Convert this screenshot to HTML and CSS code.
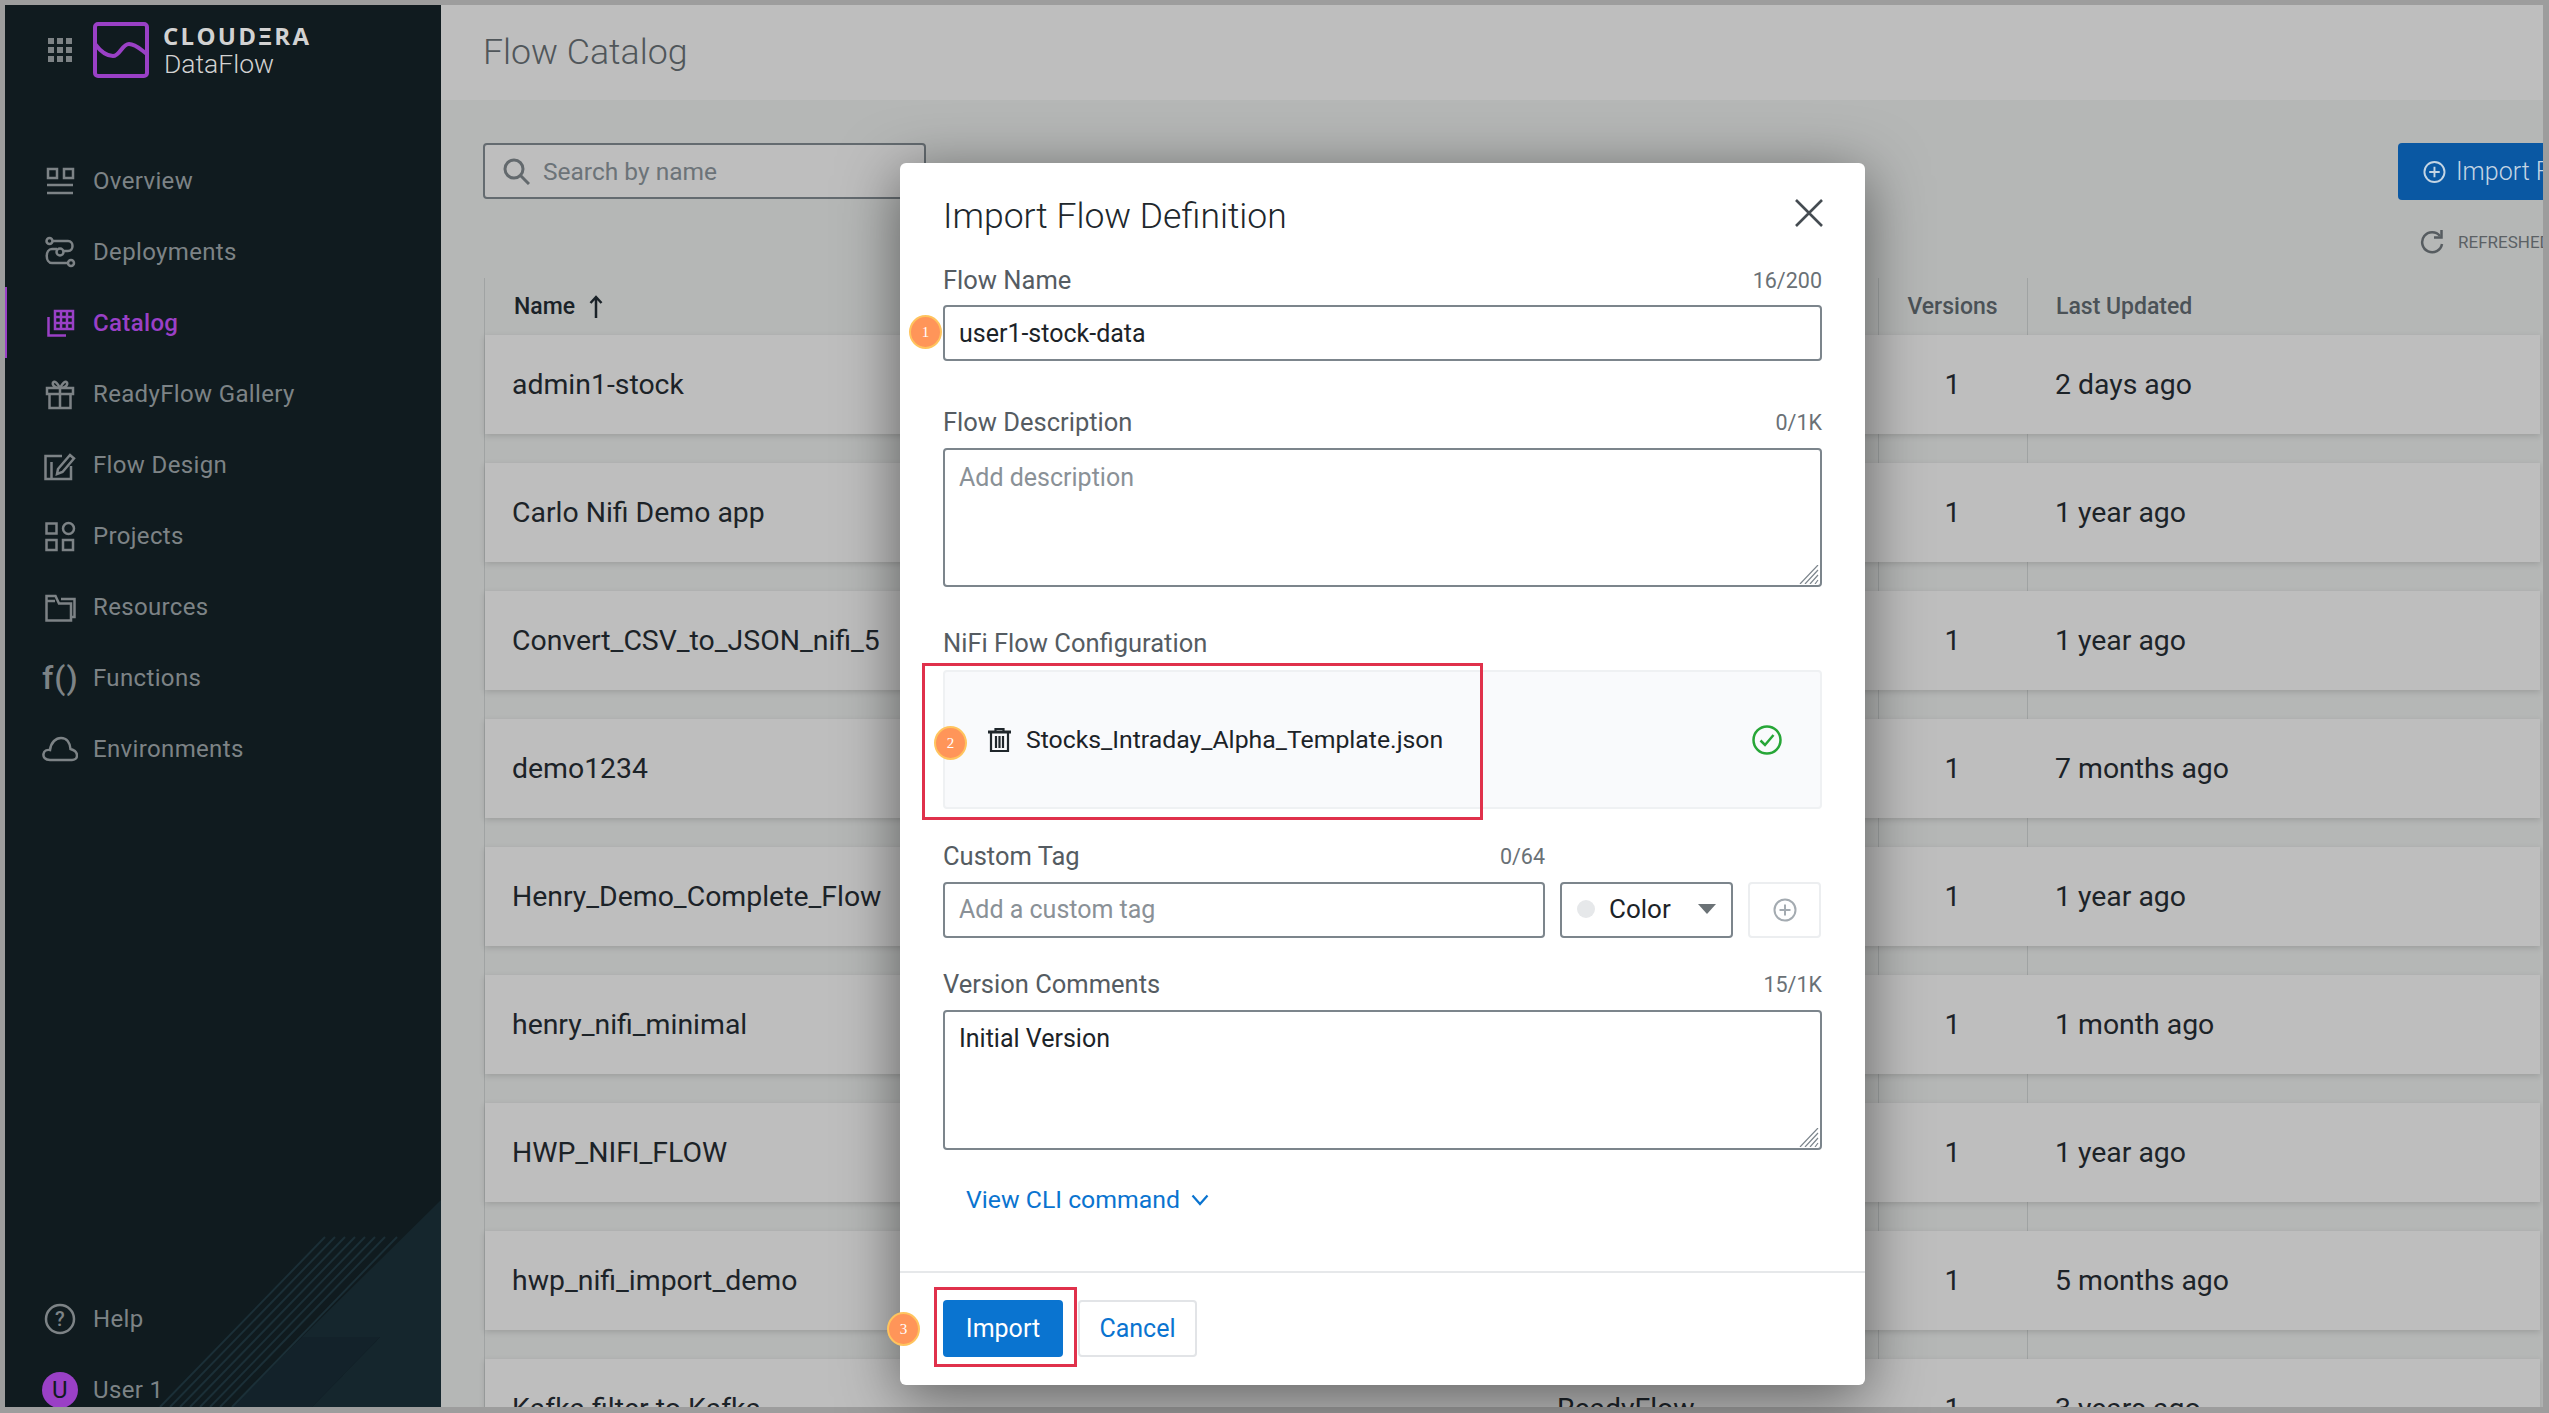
FILE: index.html
```html
<!DOCTYPE html>
<html lang="en">
<head>
<meta charset="utf-8">
<title>Flow Catalog</title>
<link rel="stylesheet" href="styles.css">
</head>
<body>
<div class="app">
  <aside class="sidebar">
    <svg class="deco" viewBox="0 0 436 207" width="436" height="207">
      <polygon points="436,0 297,137 375,137 307,207 436,207" fill="#15262d"/>
      <polygon points="297,137 375,137 307,207 227,207" fill="#13222a"/>
      <g stroke="#1b2f37" stroke-width="2">
        <line x1="320" y1="37" x2="155" y2="207"/><line x1="330" y1="37" x2="165" y2="207"/>
        <line x1="340" y1="37" x2="175" y2="207"/><line x1="350" y1="37" x2="185" y2="207"/>
        <line x1="360" y1="37" x2="195" y2="207"/><line x1="370" y1="37" x2="205" y2="207"/>
        <line x1="380" y1="37" x2="215" y2="207"/><line x1="392" y1="37" x2="227" y2="207"/>
      </g>
    </svg>
    <div class="brand">
      <svg class="apps" width="24" height="24" viewBox="0 0 24 24" fill="#7d8285">
        <rect x="0" y="0" width="6" height="6"/><rect x="9" y="0" width="6" height="6"/><rect x="18" y="0" width="6" height="6"/>
        <rect x="0" y="9" width="6" height="6"/><rect x="9" y="9" width="6" height="6"/><rect x="18" y="9" width="6" height="6"/>
        <rect x="0" y="18" width="6" height="6"/><rect x="9" y="18" width="6" height="6"/><rect x="18" y="18" width="6" height="6"/>
      </svg>
      <svg class="logo" width="56" height="56" viewBox="0 0 56 56" fill="none" stroke="#9a40c6" stroke-width="4">
        <rect x="2" y="2" width="52" height="52" rx="3"/>
        <path d="M2 22C8 30 14 34 20 34C27 34 29 22 36 22C43 22 48 28 54 32"/>
      </svg>
      <div class="brand-text">
        <div class="brand-name">CLOUDΞRA</div>
        <div class="brand-sub">DataFlow</div>
      </div>
    </div>
    <nav class="nav">
      <a class="nav-item">
        <svg class="ico" viewBox="0 0 36 32"><rect x="6" y="4" width="9" height="9"/><rect x="22" y="4" width="9" height="9"/><path d="M5 20H31M5 28H31"/></svg>
        <span>Overview</span>
      </a>
      <a class="nav-item">
        <svg class="ico" viewBox="0 0 36 32"><circle cx="7.5" cy="5" r="3"/><path d="M10.500 5H26C32 5 32 15 26 15H21"/><circle cx="18" cy="16" r="3.500"/><path d="M15 13H10C3 13 3 27 10 27H26"/><circle cx="29" cy="27" r="3"/></svg>
        <span>Deployments</span>
      </a>
      <a class="nav-item active">
        <svg class="ico" viewBox="0 0 36 32"><rect x="13" y="4" width="18" height="18"/><path d="M19 4V22M25 4V22M13 10H31M13 16H31M6.500 10V28.500H24"/></svg>
        <span>Catalog</span>
      </a>
      <a class="nav-item">
        <svg class="ico" viewBox="0 0 36 32"><path d="M5 10H31V16H5ZM7.500 16V30H28.500V16M18 10V30M18 10C13 10 10 7 11 4.500C13 2 16 6 18 10C20 6 23 2 25 4.500C26 7 23 10 18 10"/></svg>
        <span>ReadyFlow Gallery</span>
      </a>
      <a class="nav-item">
        <svg class="ico" viewBox="0 0 36 32"><path d="M20 7H3.500V30H29V17M9.500 13V30M16 20L28 6L32 9.500L20.500 23L15 25Z"/></svg>
        <span>Flow Design</span>
      </a>
      <a class="nav-item">
        <svg class="ico" viewBox="0 0 36 32"><rect x="4.500" y="3.500" width="10" height="10"/><circle cx="26.500" cy="8.500" r="5.500"/><rect x="4.500" y="20" width="10" height="10"/><rect x="21" y="20" width="10" height="10"/></svg>
        <span>Projects</span>
      </a>
      <a class="nav-item">
        <svg class="ico" viewBox="0 0 36 32"><path d="M4.500 10V29.500H29V12.500H17L13.500 5H4.500V10H13"/><path d="M19 8H32.500V26H29"/></svg>
        <span>Resources</span>
      </a>
      <a class="nav-item">
        <span class="fx">f()</span>
        <span>Functions</span>
      </a>
      <a class="nav-item">
        <svg class="ico" viewBox="0 0 36 32"><path d="M8 27C3 27 1 24 1.500 21C2 18 5 16.500 8 17C9 9 14 5 19 5C25 5 28 10 28.500 16C32 17 35 19 35 22.500C35 25.500 32.500 27 30 27Z"/></svg>
        <span>Environments</span>
      </a>
    </nav>
    <div class="side-foot">
      <a class="nav-item">
        <svg class="ico" viewBox="0 0 36 32"><circle cx="18" cy="16" r="14"/><text x="18" y="22.500" class="qm">?</text></svg>
        <span>Help</span>
      </a>
      <a class="nav-item">
        <span class="avatar">U</span>
        <span>User 1</span>
      </a>
    </div>
  </aside>

  <main class="main">
    <header class="topbar"><h1 class="page-title">Flow Catalog</h1></header>
    <section class="content">
      <div class="toolbar">
        <div class="search">
          <svg width="27" height="27" viewBox="0 0 27 27" fill="none" stroke="#63696d" stroke-width="3"><circle cx="11" cy="11" r="9"/><path d="M17.500 17.500L26 26"/></svg>
          <span>Search by name</span>
        </div>
        <div class="actions">
          <button class="import-flow">
            <svg width="24" height="24" viewBox="0 0 24 24" fill="none" stroke="#c4d5e4" stroke-width="2"><circle cx="12" cy="12" r="10.500"/><path d="M12 6.500V17.500M6.500 12H17.500"/></svg>
            <span>Import Flow Definition</span>
          </button>
          <div class="refresh">
            <svg width="24" height="26" viewBox="0 0 24 26" fill="none" stroke="#565c60" stroke-width="2.500"><path d="M20 7A10 10 0 1 0 22 15"/><path d="M21.500 1V8.500H14" /></svg>
            <span>REFRESHED 1 MIN AGO</span>
          </div>
        </div>
      </div>
      <div class="table">
        <div class="thead">
          <div class="th th-name">Name <svg width="14" height="24" viewBox="0 0 14 24" fill="none" stroke="#1a2228" stroke-width="2.500"><path d="M7 23V2M1.500 8L7 2L12.500 8"/></svg></div>
          <div class="th"></div>
          <div class="th th-ver">Versions</div>
          <div class="th th-up">Last Updated</div>
        </div>
        <div class="row"><div>admin1-stock</div><div></div><div class="ver">1</div><div class="up">2 days ago</div></div>
        <div class="row"><div>Carlo Nifi Demo app</div><div></div><div class="ver">1</div><div class="up">1 year ago</div></div>
        <div class="row"><div>Convert_CSV_to_JSON_nifi_5</div><div></div><div class="ver">1</div><div class="up">1 year ago</div></div>
        <div class="row"><div>demo1234</div><div></div><div class="ver">1</div><div class="up">7 months ago</div></div>
        <div class="row"><div>Henry_Demo_Complete_Flow</div><div></div><div class="ver">1</div><div class="up">1 year ago</div></div>
        <div class="row"><div>henry_nifi_minimal</div><div></div><div class="ver">1</div><div class="up">1 month ago</div></div>
        <div class="row"><div>HWP_NIFI_FLOW</div><div></div><div class="ver">1</div><div class="up">1 year ago</div></div>
        <div class="row"><div>hwp_nifi_import_demo</div><div></div><div class="ver">1</div><div class="up">5 months ago</div></div>
        <div class="row"><div>Kafka filter to Kafka</div><div>ReadyFlow</div><div class="ver">1</div><div class="up">3 years ago</div></div>
      </div>
    </section>
  </main>
</div>

<div class="modal">
  <div class="modal-head">
    <h2 class="modal-title">Import Flow Definition</h2>
    <svg class="close" width="30" height="30" viewBox="0 0 30 30" fill="none" stroke="#454c52" stroke-width="2.600"><path d="M2 2L28 28M28 2L2 28"/></svg>
  </div>
  <div class="modal-body">
    <div class="field f-name">
      <div class="label-row"><label>Flow Name</label><span class="count">16/200</span></div>
      <div class="input">user1-stock-data</div>
    </div>
    <div class="field f-desc">
      <div class="label-row"><label>Flow Description</label><span class="count">0/1K</span></div>
      <div class="input area placeholder">Add description
        <svg class="grip" width="20" height="19" viewBox="0 0 20 19" stroke="#7c858c" stroke-width="1.200"><path d="M1 19L19 0M6 19L19 5M11 19L19 10M16 19L19 15"/></svg>
      </div>
    </div>
    <div class="field f-nifi">
      <div class="label-row"><label>NiFi Flow Configuration</label></div>
      <div class="dropzone">
        <svg width="23" height="24" viewBox="0 0 23 24" fill="none" stroke="#1f262b" stroke-width="2.200"><path d="M0 4H23" stroke-width="3"/><path d="M7.500 3V1H15.500V3M3 5V23H20V5M8 8V20M11.500 8V20M15 8V20"/></svg>
        <span class="file">Stocks_Intraday_Alpha_Template.json</span>
        <svg class="ok" width="30" height="30" viewBox="0 0 30 30" fill="none" stroke="#27a637" stroke-width="2.500"><circle cx="15" cy="15" r="13.500"/><path d="M8.500 15.500L13 20L21.500 10"/></svg>
      </div>
    </div>
    <div class="field f-tag">
      <div class="tag-grid">
        <div class="label-row tag-label"><label>Custom Tag</label><span class="count">0/64</span></div>
        <div class="input placeholder nudge">Add a custom tag</div>
        <div class="color-select nudge"><i class="dot"></i><span>Color</span><i class="caret"></i></div>
        <div class="add-tag">
          <svg width="24" height="24" viewBox="0 0 24 24" fill="none" stroke="#a4abb1" stroke-width="2"><circle cx="12" cy="12" r="10.500"/><path d="M12 6.500V17.500M6.500 12H17.500"/></svg>
        </div>
      </div>
    </div>
    <div class="field f-ver">
      <div class="label-row"><label>Version Comments</label><span class="count">15/1K</span></div>
      <div class="input area">Initial Version
        <svg class="grip" width="20" height="19" viewBox="0 0 20 19" stroke="#7c858c" stroke-width="1.200"><path d="M1 19L19 0M6 19L19 5M11 19L19 10M16 19L19 15"/></svg>
      </div>
    </div>
    <a class="cli">View CLI command
      <svg width="18" height="12" viewBox="0 0 18 12" fill="none" stroke="#0a74d0" stroke-width="2.200"><path d="M1.500 1.500L9 10L16.500 1.500"/></svg>
    </a>
  </div>
  <div class="modal-foot">
    <button class="btn primary">Import</button>
    <button class="btn ghost">Cancel</button>
  </div>
  <div class="redbox rb-file"></div>
  <div class="redbox rb-import"></div>
  <div class="badge b1">1</div>
  <div class="badge b2">2</div>
  <div class="badge b3">3</div>
</div>
</body>
</html>
```
FILE: styles.css
```css
* { box-sizing: border-box; }
html, body { margin: 0; height: 100%; overflow: hidden; }
body {
  position: relative;
  width: 2549px;
  height: 1413px;
  padding: 5px 6px 6px 5px;
  background: #9d9d9d;
  font-family: Roboto, "Liberation Sans", sans-serif;
}
.app { display: flex; height: 1402px; overflow: hidden; }

/* Sidebar */
.sidebar {
  position: relative;
  flex: 0 0 436px;
  display: flex;
  flex-direction: column;
  background: #101b1f;
  overflow: hidden;
}
.deco { position: absolute; left: 0; bottom: 0; }
.brand { position: relative; display: flex; align-items: center; height: 140px; padding: 0 0 50px 43px; }
.logo { margin-left: 21px; }
.brand-text { margin-left: 14px; }
.brand-name { font-family: "Open Sans", sans-serif; font-weight: 700; font-size: 24px; line-height: 27px; letter-spacing: 2.300px; color: #d2d2d2; }
.brand-sub { font-size: 26.500px; line-height: 29px; font-weight: 300; color: #d2d2d2; margin-left: 1px; }
.nav { position: relative; }
.side-foot { position: relative; margin-top: auto; margin-bottom: -18px; }
.nav-item {
  display: flex;
  align-items: center;
  gap: 15px;
  height: 71px;
  padding-left: 37px;
  font-size: 24px;
  color: #7d8386;
  letter-spacing: 0.350px;
}
.ico { flex: 0 0 36px; width: 36px; height: 32px; fill: none; stroke: currentColor; stroke-width: 2.500; }
.nav-item.active { color: #9a40c6; box-shadow: inset 2px 0 0 #9a40c6; font-weight: 500; }
.qm { fill: currentColor; stroke: none; font-size: 20px; font-weight: 500; text-anchor: middle; }
.fx { flex: 0 0 36px; width: 36px; font-size: 32px; line-height: 32px; font-weight: 500; white-space: nowrap; letter-spacing: 1px; }
.avatar {
  flex: 0 0 36px; width: 36px; height: 36px; border-radius: 50%;
  background: #9a40c6; color: #101b1f; font-size: 24px; line-height: 36px; text-align: center;
}

/* Main */
.main { flex: 1; min-width: 0; background: #b5b7b6; overflow: hidden; }
.topbar { display: flex; align-items: center; height: 95px; padding: 0 0 2px 42px; background: #bebebe; }
.page-title { margin: 0; font-size: 35.700px; font-weight: 300; color: #50565a; }
.content { padding: 43px 3px 0 42px; }
.toolbar { display: flex; align-items: flex-start; justify-content: space-between; }
.search {
  display: flex; align-items: center; gap: 13px;
  width: 443px; height: 56px; padding-left: 18px;
  border: 2px solid #646b70; border-radius: 4px;
  background: #bebebe; color: #6c7378; font-size: 24.500px;
}
.actions { flex: 0 0 300px; margin-right: -158px; }
.import-flow {
  display: flex; align-items: center; gap: 10px;
  width: 300px; height: 57px; padding: 0 0 0 25px;
  border: 0; border-radius: 4px;
  background: #0a58a3; color: #c4d5e4;
  font: 300 25px Roboto, sans-serif; white-space: nowrap;
}
.refresh { display: flex; align-items: center; gap: 14px; height: 28px; margin-top: 28px; padding-left: 22px; font-size: 17px; color: #5b6165; white-space: nowrap; }
.table {
  margin: 22px 0 0 1px;
  border-left: 1px solid #a0a3a3;
  background:
    linear-gradient(#a0a3a3, #a0a3a3) 1393px 0 / 1px 100% no-repeat,
    linear-gradient(#a0a3a3, #a0a3a3) 1542px 0 / 1px 100% no-repeat;
}
.thead, .row { display: grid; grid-template-columns: 1072px 321px 149px 1fr; align-items: center; }
.thead { height: 57px; }
.th { font-size: 23px; font-weight: 500; color: #4b5257; }
.th-name { display: flex; align-items: center; gap: 14px; padding-left: 29px; color: #1a2228; }
.th-ver { text-align: center; }
.th-up { padding-left: 29px; }
.row {
  height: 99px; margin-bottom: 29px;
  background: #bebebe;
  box-shadow: 0 2px 6px rgba(0, 0, 0, .14);
  font-size: 28.400px; color: #1c2328;
}
.row > div:first-child { padding-left: 27px; }
.ver { text-align: center; }
.up { padding-left: 28px; }

/* Modal */
.modal {
  position: absolute; left: 900px; top: 163px;
  width: 965px; height: 1222px;
  background: #fff; border-radius: 6px;
  box-shadow: 0 12px 60px rgba(0, 0, 0, .5);
  display: flex; flex-direction: column;
}
.modal-head { display: flex; justify-content: space-between; height: 103px; padding: 35px 41px 0 43px; }
.modal-title { margin: 0; font-size: 35.500px; line-height: 36px; font-weight: 300; color: #20272c; }
.close { flex: none; }
.modal-body { flex: 1; padding: 0 43px; }
.label-row { display: flex; justify-content: space-between; align-items: center; height: 28px; margin-bottom: 12px; }
.f-name .label-row { margin-bottom: 11px; }
.label-row label { font-size: 25.500px; color: #555c62; }
.count { font-size: 21.500px; color: #6a7176; }
.input {
  position: relative;
  height: 56px; padding: 0 14px;
  border: 2px solid #7c858c; border-radius: 4px;
  display: flex; align-items: center;
  font-size: 25px; color: #1c2328;
}
.input.area { height: 139px; align-items: flex-start; padding-top: 12px; line-height: 32px; }
.placeholder { color: #8a9197; }
.nudge { padding-bottom: 2px; }
.grip { position: absolute; right: 1px; bottom: 1px; }
.f-name { margin-bottom: 47px; }
.f-desc { margin-bottom: 42px; }
.f-nifi { margin-bottom: 33px; }
.f-nifi .label-row { margin-bottom: 13px; }
.f-tag { margin-bottom: 32px; }
.f-ver .input.area { height: 140px; padding-top: 11px; }
.dropzone {
  display: flex; align-items: center;
  height: 139px; padding: 0 38px 0 43px;
  background: #f9fafc; border: 2px solid #eff1f3; border-radius: 4px;
}
.file { margin-left: 15px; font-size: 24.800px; color: #1c2328; }
.ok { margin-left: auto; }
.tag-grid { display: grid; grid-template-columns: 602px 173px 73px; column-gap: 15px; }
.tag-label { grid-column: 1; }
.tag-grid .input { grid-row: 2; grid-column: 1; }
.color-select {
  grid-row: 2; grid-column: 2;
  display: flex; align-items: center;
  padding: 0 15px 2px; border: 2px solid #7c858c; border-radius: 4px;
  font-size: 26px; color: #1c2328;
}
.dot { width: 18px; height: 18px; border-radius: 50%; background: #e6e8ea; margin-right: 14px; }
.caret { margin-left: auto; width: 0; height: 0; border: 9px solid transparent; border-top: 10px solid #6b7276; border-bottom: 0; }
.add-tag {
  grid-row: 2; grid-column: 3;
  display: flex; align-items: center; justify-content: center;
  border: 2px solid #eceef0; border-radius: 4px;
}
.cli {
  display: inline-flex; align-items: center; gap: 11px;
  margin: 33px 0 0 23px;
  font-size: 24.800px; line-height: 34px; color: #0a74d0;
}
.modal-foot { display: flex; height: 114px; padding: 27px 0 0 43px; border-top: 2px solid #e6e8ea; gap: 15px; }
.btn { height: 57px; border-radius: 4px; font: 400 25px Roboto, sans-serif; }
.btn.primary { width: 120px; border: 0; background: #0a74d0; color: #fff; }
.btn.ghost { width: 119px; background: #fff; border: 2px solid #e2e4e7; color: #0a74d0; }

/* Annotations */
.redbox { position: absolute; border: 3px solid #e0314b; }
.rb-file { left: 22px; top: 500px; width: 561px; height: 157px; }
.rb-import { left: 34px; top: 1124px; width: 143px; height: 80px; }
.badge {
  position: absolute; width: 33px; height: 34px; border-radius: 50%;
  background: #ff9559; border: 2px solid #ffc45e;
  color: #fff; font: 15px/30px "Liberation Serif", serif; text-align: center;
}
.b1 { left: 9px; top: 152px; }
.b2 { left: 34px; top: 563px; }
.b3 { left: -13px; top: 1149px; }
```
